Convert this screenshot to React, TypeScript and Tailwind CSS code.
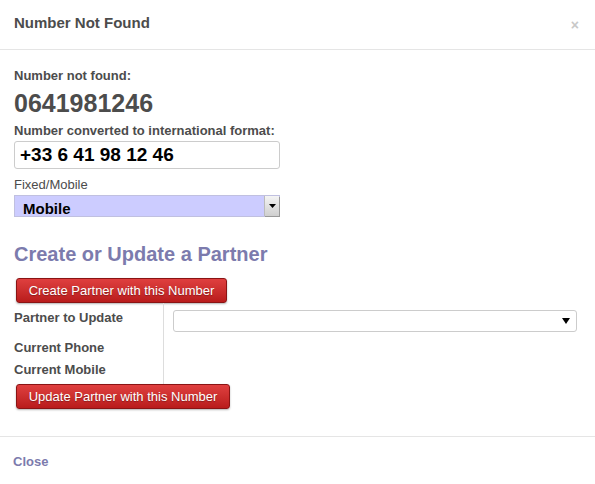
export default function App() {
  return (
    <div className="h-[484px] w-[595px] bg-white text-[#4c4c4c] font-['Liberation_Sans',Arial,sans-serif] flex flex-col">
      <div className="relative h-[50px] border-b border-[#e5e5e5] px-[14px] pt-[14px]">
        <h3 className="text-[15px] font-bold leading-[18px]">Number Not Found</h3>
        <span className="absolute right-[16px] top-[18px] text-[14px] font-bold leading-none text-[#c8c8c8]">×</span>
      </div>

      <div className="flex-1 px-[14px] pt-[18px]">
        <div className="text-[13px] font-bold leading-[16px]">Number not found:</div>
        <div className="mt-[4px] text-[25px] font-bold leading-[30px]">0641981246</div>
        <div className="mt-[5px] text-[13px] font-bold leading-[16px]">Number converted to international format:</div>
        <div className="mt-[2px] flex h-[28px] w-[266px] items-center rounded-[3px] border border-[#cccccc] px-[5px] text-[19px] font-bold text-black">
          +33 6 41 98 12 46
        </div>
        <div className="mt-[8px] text-[13px] leading-[16px]">Fixed/Mobile</div>
        <div className="mt-[2px] flex h-[22px] w-[266px] items-center bg-[#ccccff] border border-[#c0c0e0]">
          <span className="flex-1 pl-[8px] pt-[5px] text-[15px] font-bold text-black leading-none">Mobile</span>
          <span className="flex h-[20px] w-[15px] items-center justify-center border-l border-[#bbbbbb] bg-gradient-to-b from-[#f4f4f4] to-[#cfcfcf] shadow-[1px_1px_0_#999]">
            <svg width="7" height="4" viewBox="0 0 7 4"><path d="M0 0h7L3.5 4z" fill="#000" /></svg>
          </span>
        </div>

        <h2 className="mt-[25px] text-[20px] font-bold leading-[24px] text-[#7c7bad]">Create or Update a Partner</h2>

        <button className="mt-[12px] ml-[2px] h-[25px] w-[211px] rounded-[3px] border border-[#8a1414] bg-gradient-to-b from-[#df3f3f] to-[#b91b1b] text-[13px] text-white shadow-[0_1px_2px_rgba(0,0,0,0.3)] [text-shadow:0_1px_1px_rgba(0,0,0,0.3)]">
          Create Partner with this Number
        </button>

        <div className="flex">
          <div className="w-[150px] border-r border-[#dddddd] pt-[7px] pb-[6px] text-[13px] font-bold leading-[16px]">
            <div>Partner to Update</div>
            <div className="mt-[14px]">Current Phone</div>
            <div className="mt-[6px]">Current Mobile</div>
          </div>
          <div className="flex-1 pl-[9px] pt-[7px]">
            <div className="flex h-[22px] w-[404px] items-center justify-end rounded-[3px] border border-[#cccccc] pr-[6px]">
              <svg width="8" height="6" viewBox="0 0 8 6"><path d="M0 0h8L4 6z" fill="#000" /></svg>
            </div>
          </div>
        </div>

        <button className="ml-[2px] h-[25px] w-[214px] rounded-[3px] border border-[#8a1414] bg-gradient-to-b from-[#df3f3f] to-[#b91b1b] text-[13px] text-white shadow-[0_1px_2px_rgba(0,0,0,0.3)] [text-shadow:0_1px_1px_rgba(0,0,0,0.3)]">
          Update Partner with this Number
        </button>
      </div>

      <div className="h-[48px] border-t border-[#e5e5e5] px-[13px] pt-[12px]">
        <span className="text-[13px] font-bold text-[#7c7bad]">Close</span>
      </div>
    </div>
  );
}
